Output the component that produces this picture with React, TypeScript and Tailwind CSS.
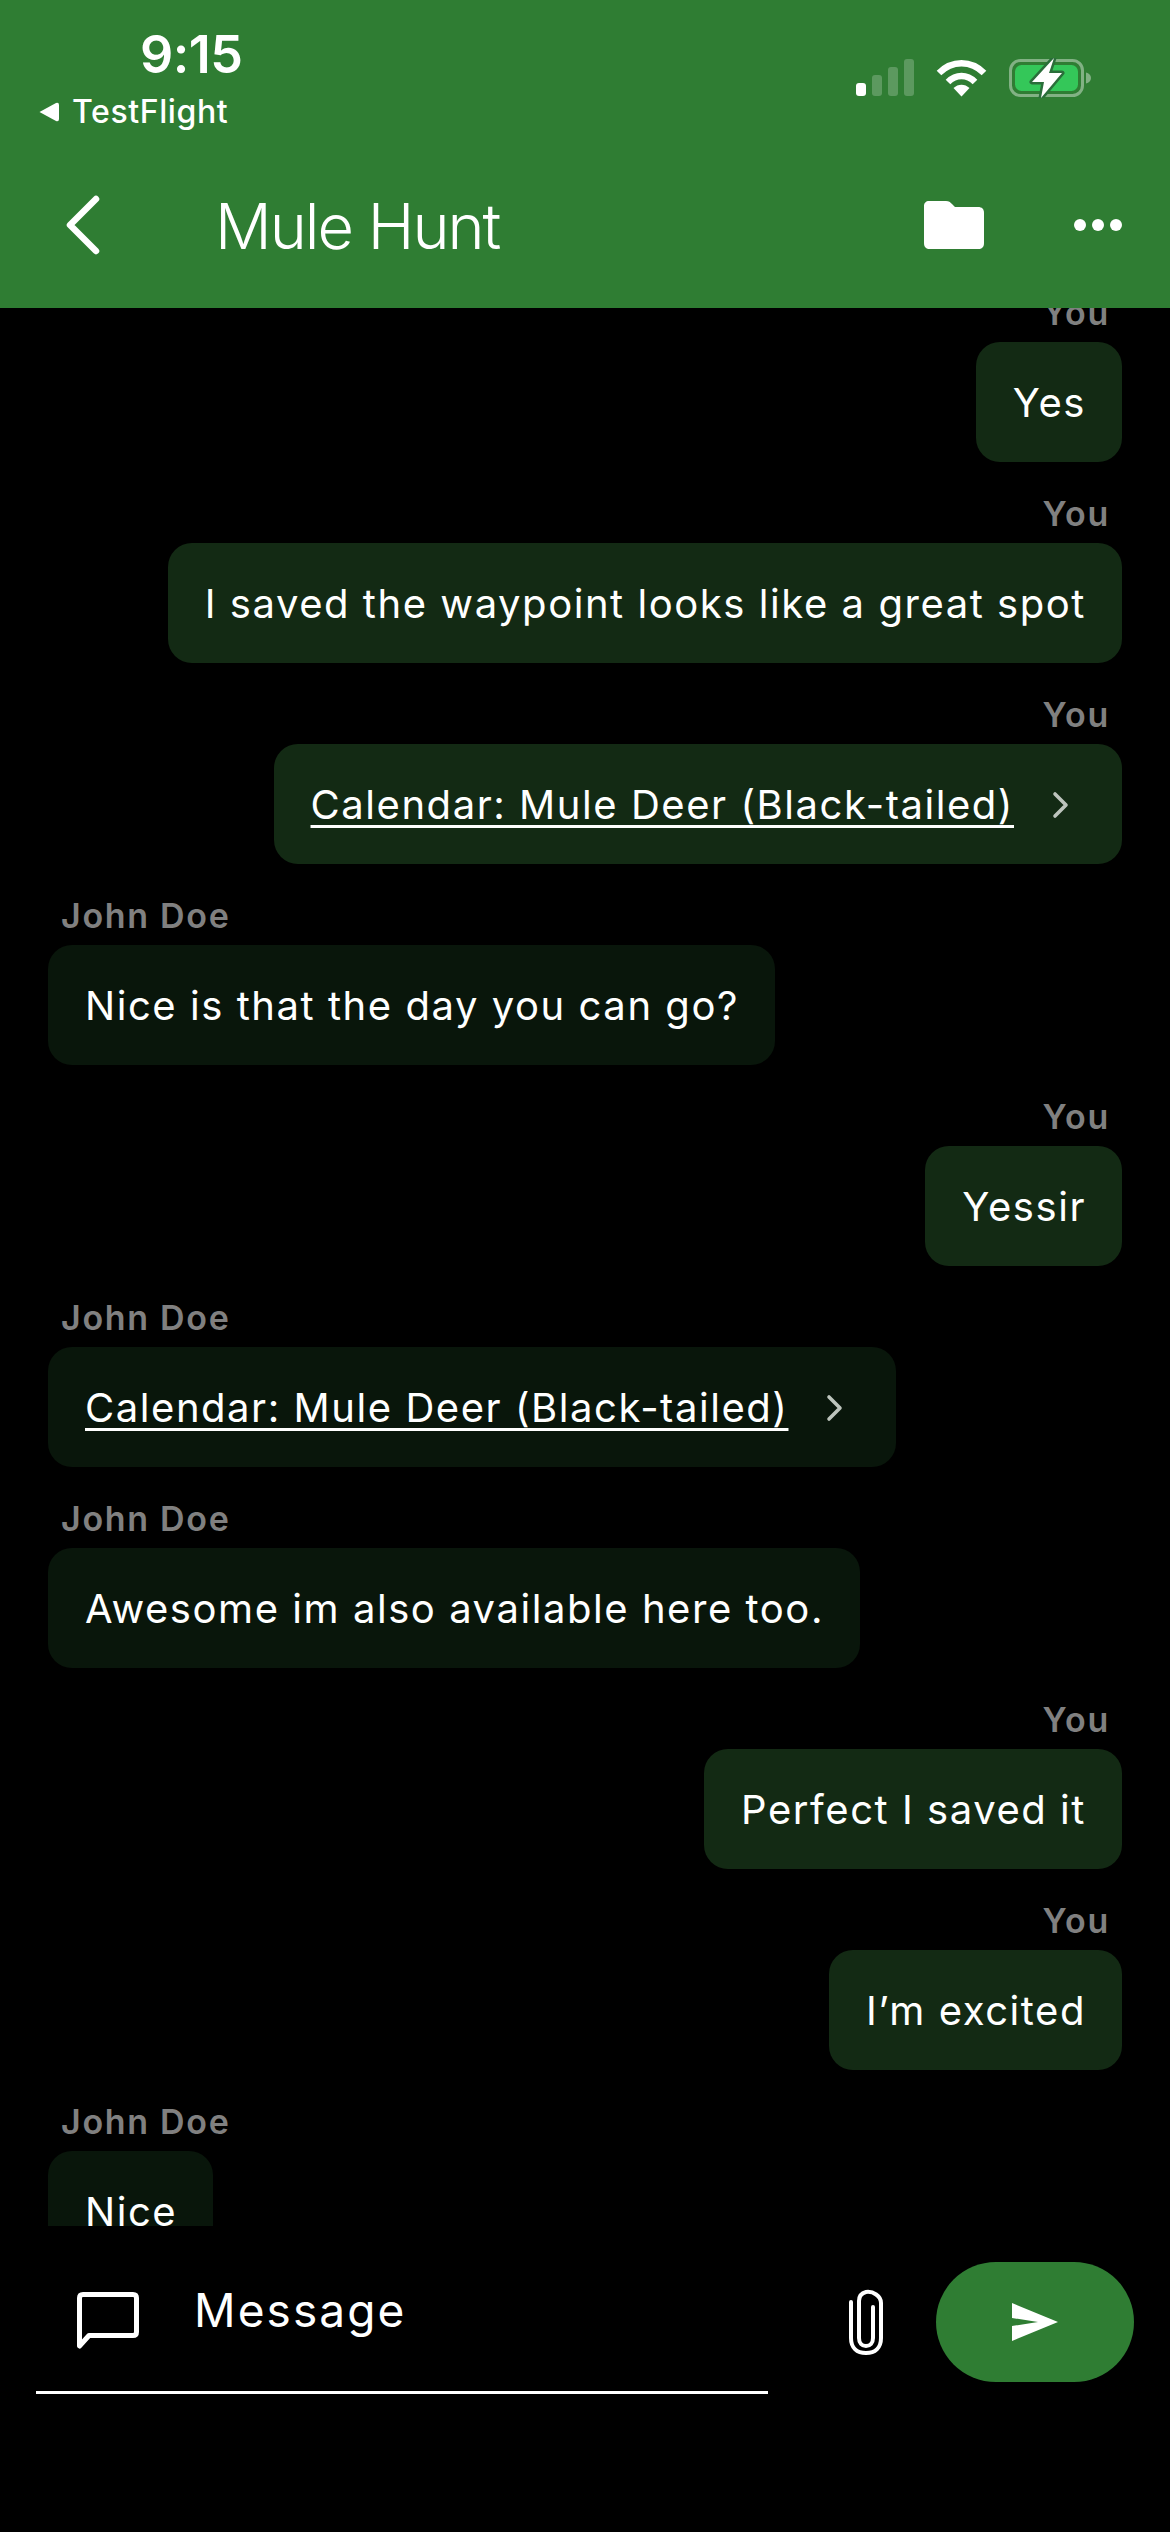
import React from "react";

type Msg = { me: boolean; text: string; link?: boolean };

const messages: Msg[] = [
  { me: true, text: "Yes" },
  { me: true, text: "I saved the waypoint looks like a great spot" },
  { me: true, text: "Calendar: Mule Deer (Black-tailed)", link: true },
  { me: false, text: "Nice is that the day you can go?" },
  { me: true, text: "Yessir" },
  { me: false, text: "Calendar: Mule Deer (Black-tailed)", link: true },
  { me: false, text: "Awesome im also available here too." },
  { me: true, text: "Perfect I saved it" },
  { me: true, text: "I’m excited" },
  { me: false, text: "Nice" },
];

function Bubble({ m }: { m: Msg }) {
  return (
    <div className={`flex flex-col ${m.me ? "items-end pr-[48px]" : "items-start pl-[48px]"}`}>
      <div className={`h-[66px] pt-[15px] text-[34px] leading-[44px] font-semibold tracking-[1.7px] text-[#808080] ${m.me ? "pr-[12px]" : "pl-[13px]"}`}>
        {m.me ? "You" : "John Doe"}
      </div>
      <div className={`h-[120px] mb-[15px] rounded-[24px] pl-[37px] pr-[36px] pt-[2px] flex items-center text-[40px] tracking-[1.55px] text-white ${m.me ? "bg-[#132a14]" : "bg-[#09160b]"}`}>
        <span className={m.link ? "underline decoration-[3px] underline-offset-[6px]" : ""}>{m.text}</span>
        {m.link && (
          <svg width="20" height="28" viewBox="0 0 20 28" className="ml-[37px] mr-[15px]" fill="none">
            <path d="M4 3l11 11L4 25" stroke="#bdc4bd" strokeWidth="3.6" strokeLinecap="round" strokeLinejoin="round" />
          </svg>
        )}
      </div>
    </div>
  );
}

export default function App() {
  return (
    <div className="h-[2532px] w-[1170px] bg-black flex flex-col overflow-hidden font-['Inter',sans-serif]">
      <header className="h-[308px] shrink-0 bg-[#2f7d33] text-white flex flex-col">
        <div className="h-[160px] flex justify-between">
          <div className="pl-[39px] pt-[24px] flex flex-col">
            <div className="ml-[101px] text-[52px] leading-[62px] font-semibold tracking-[-0.5px]">9:15</div>
            <div className="flex items-center gap-[14px] mt-[6px] text-[32px] leading-[40px] font-medium tracking-[0.6px]">
              <svg width="20" height="20" viewBox="0 0 20 20"><path d="M0.500 10 L17 1 Q20 0 20 3 V17 Q20 20 17 19 Z" fill="#fff" /></svg>
              <span className="-ml-[1px]">TestFlight</span>
            </div>
          </div>
          <div className="flex items-start gap-[22px] pt-[59px] pr-[79px]">
            <svg width="58" height="38" viewBox="0 0 58 38">
              <rect x="0" y="24" width="10" height="13" rx="3" fill="#fff" />
              <rect x="16" y="16" width="10" height="21" rx="3" fill="#fff" fillOpacity=".22" />
              <rect x="32" y="8" width="10" height="29" rx="3" fill="#fff" fillOpacity=".22" />
              <rect x="48" y="0" width="10" height="37" rx="3" fill="#fff" fillOpacity=".22" />
            </svg>
            <svg width="51" height="38" viewBox="0 0 51 38" fill="none">
              <path d="M3 14 C16 1 35 1 48 14" stroke="#fff" strokeWidth="6.5" />
              <path d="M12 23 C20 15 31 15 39 23" stroke="#fff" strokeWidth="6.5" />
              <path d="M17.500 29 C22 24.500 29 24.500 33.500 29 L25.500 37.500Z" fill="#fff" />
            </svg>
            <svg width="82" height="40" viewBox="0 0 82 40" fill="none" className="-mt-[1px]">
              <rect x="1.500" y="2.500" width="72" height="35" rx="10" stroke="#fff" strokeOpacity=".4" strokeWidth="3" />
              <rect x="6" y="7" width="63" height="26" rx="6.500" fill="#34c759" />
              <path d="M77 14.500c3 .8 5 2.800 5 5.500s-2 4.700-5 5.500z" fill="#fff" fillOpacity=".4" />
              <path d="M45 0 L23 24 H35 L32 40 L53 15 H40 Z" fill="#fff" stroke="#2a6e3a" strokeWidth="5" paintOrder="stroke" strokeLinejoin="round" />
            </svg>
          </div>
        </div>
        <div className="flex-1 flex items-start pl-[64px] pr-[48px] pt-[35px]">
          <svg width="38" height="60" viewBox="0 0 38 60" fill="none">
            <path d="M32 4 L6 30 L32 56" stroke="#fff" strokeWidth="6.500" strokeLinecap="round" strokeLinejoin="round" />
          </svg>
          <div className="ml-[113px] text-[63px] leading-[62px] font-light tracking-[-2px]">Mule Hunt</div>
          <div className="ml-auto flex items-start">
            <svg width="60" height="48" viewBox="0 0 60 48" className="mt-[6px]">
              <path d="M5 0H22C25 0 26 1 28 3L31 6H54C58 6 60 8 60 12V42C60 46 58 48 54 48H6C2 48 0 46 0 42V5C0 2 2 0 5 0Z" fill="#fff" />
            </svg>
            <svg width="48" height="12" viewBox="0 0 48 12" className="ml-[90px] mt-[24px]">
              <circle cx="6" cy="6" r="6" fill="#fff" />
              <circle cx="24" cy="6" r="6" fill="#fff" />
              <circle cx="42" cy="6" r="6" fill="#fff" />
            </svg>
          </div>
        </div>
      </header>
      <main className="h-[1918px] shrink-0 overflow-hidden">
        <div className="-mt-[32px]">
          {messages.map((m, i) => (
            <Bubble key={i} m={m} />
          ))}
        </div>
      </main>
      <footer className="flex-1 relative flex items-start pt-[36px] pl-[36px]">
        <div className="w-[732px] h-[132px] border-b-[3px] border-white flex items-start">
          <svg width="62" height="58" viewBox="0 0 62 58" fill="none" className="ml-[41px] mt-[30px]">
            <path d="M2.500 54 V6 Q2.500 2.500 6 2.500 H56 Q59.500 2.500 59.500 6 V40 Q59.500 43.500 56 43.500 H12 Z" stroke="#fff" strokeWidth="5" strokeLinejoin="round" />
          </svg>
          <div className="ml-[55px] mt-[20px] text-[46px] leading-[56px] tracking-[2.1px] text-white">Message</div>
        </div>
        <svg width="36" height="68" viewBox="0 0 36 68" fill="none" className="ml-[80px] mt-[26px]">
          <path d="M25 19 V50 C25 55 22 58 18 58 C14 58 11 55 11 50 V13 C11 8 14 5 18 4 C25 3 33 8 33 15 V50 C33 60 27 65 18 65 C9 65 3 60 3 50 V14" stroke="#fff" strokeWidth="4" strokeLinecap="round" />
        </svg>
        <div className="ml-[52px] w-[198px] h-[120px] rounded-[60px] bg-[#2f7d33] flex items-center justify-center">
          <svg width="46" height="38" viewBox="0 0 46 38">
            <path d="M0 0 L46 19 L0 38 V23 L26 19 L0 15 Z" fill="#fff" />
          </svg>
        </div>
      </footer>
    </div>
  );
}
